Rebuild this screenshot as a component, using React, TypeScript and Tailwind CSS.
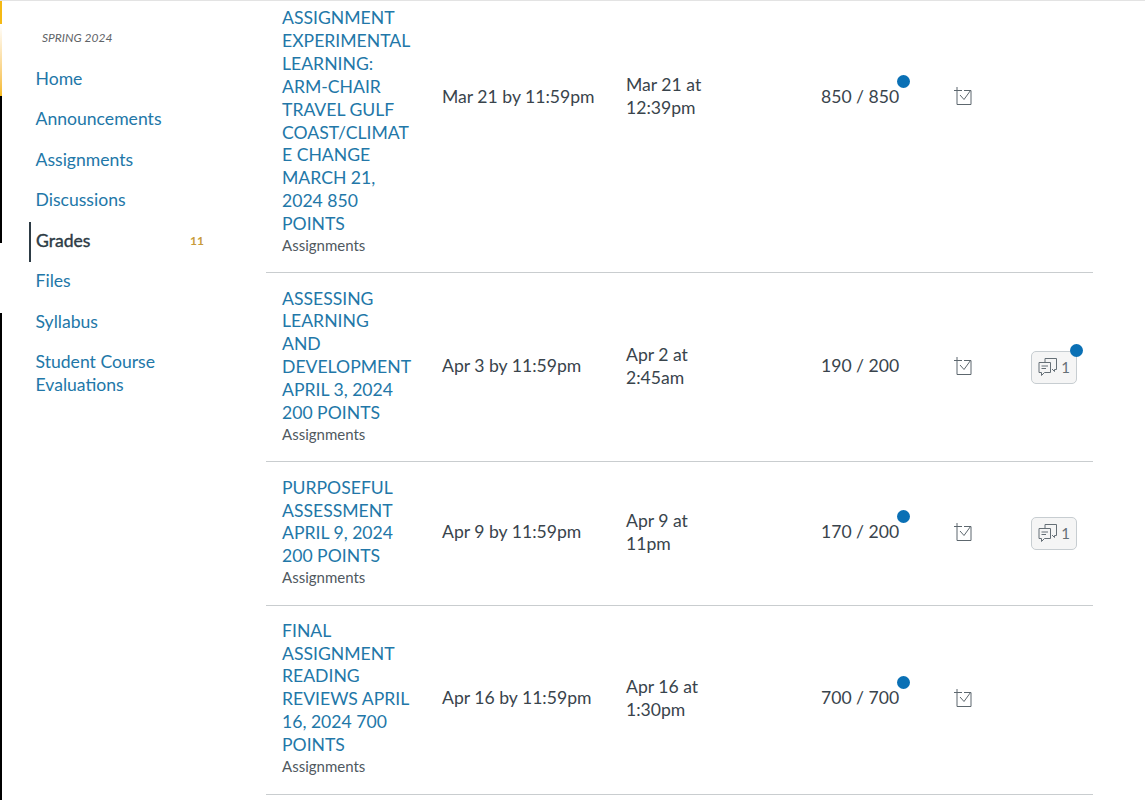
const navItems = ["Home", "Announcements", "Assignments", "Discussions", "Grades", "Files", "Syllabus", "Student Course Evaluations"];

type Row = {
  title: string;
  due: string;
  submitted: string;
  score: string;
  unread?: boolean;
  comments?: boolean;
  commentUnread?: boolean;
  pad: string;
  cellShift?: string;
};

const rows: Row[] = [
  {
    title: "ASSIGNMENT EXPERIMENTAL LEARNING: ARM-CHAIR TRAVEL GULF COAST/CLIMATE CHANGE MARCH 21, 2024 850 POINTS",
    due: "Mar 21 by 11:59pm",
    submitted: "Mar 21 at 12:39pm",
    score: "850 / 850",
    unread: true,
    pad: "pt-[6px] pb-[17px]",
    cellShift: "mb-[70px]",
  },
  {
    title: "ASSESSING LEARNING\nAND DEVELOPMENT APRIL 3, 2024 200 POINTS",
    due: "Apr 3 by 11:59pm",
    submitted: "Apr 2 at 2:45am",
    score: "190 / 200",
    comments: true,
    commentUnread: true,
    pad: "pt-[14.5px] pb-[17.1px]",
  },
  {
    title: "PURPOSEFUL ASSESSMENT APRIL 9, 2024 200 POINTS",
    due: "Apr 9 by 11:59pm",
    submitted: "Apr 9 at 11pm",
    score: "170 / 200",
    unread: true,
    comments: true,
    pad: "pt-[14.5px] pb-[17.9px]",
  },
  {
    title: "FINAL ASSIGNMENT READING REVIEWS APRIL 16, 2024 700 POINTS",
    due: "Apr 16 by 11:59pm",
    submitted: "Apr 16 at 1:30pm",
    score: "700 / 700",
    unread: true,
    pad: "pt-[13.5px] pb-[18.1px]",
  },
];

function TodoIcon({ className }: { className?: string }) {
  return (
    <svg width="19" height="18" viewBox="0 0 19 18" fill="none" stroke="#5d676e" strokeWidth="1" className={`block shrink-0 ${className ?? ""}`}>
      <path d="M3 0v17.5h14V3.5h-7M0 3.5h8" />
      <path d="M6 8l4 4.5 6.5-9" />
    </svg>
  );
}

function CommentIcon() {
  return (
    <svg width="20" height="18" viewBox="0 0 20 18" fill="none" stroke="#656f76" strokeWidth="1" className="block shrink-0">
      <path d="M1 4.5h11.5v10H6.5l-3 3v-3H1z" />
      <path d="M7 4.5V.5h11.5v11h-2v2l-2.5-2.5" />
      <path d="M3.5 8h6.5M3.5 10.5h4.5" />
    </svg>
  );
}

function Dot({ className }: { className: string }) {
  return <span className={`absolute h-[13px] w-[13px] rounded-full bg-[#0a70b5] ${className}`} />;
}

function GradeRow({ row }: { row: Row }) {
  const shift = row.cellShift ?? "";
  return (
    <div className={`flex items-center border-b border-[#c9cdcf] ${row.pad}`}>
      <div className="ml-[16px] w-[130px] shrink-0">
        <a className="block whitespace-pre-line text-[17.6px] leading-[22.9px] text-[#2277a8] [overflow-wrap:anywhere]">{row.title}</a>
        <div className="-mt-[1px] text-[15px] leading-[20px] text-[#50595f]">Assignments</div>
      </div>
      <div className={`ml-[30px] w-[184px] shrink-0 text-[17.6px] leading-[23px] ${shift}`}>{row.due}</div>
      <div className={`w-[110px] shrink-0 text-[17.6px] leading-[23px] ${shift}`}>{row.submitted}</div>
      <div className={`relative ml-[85px] w-[133px] shrink-0 text-[17.6px] leading-[23px] ${shift}`}>
        {row.score}
        {row.unread && <Dot className="left-[76px] top-[-10px]" />}
      </div>
      <TodoIcon className={shift} />
      {row.comments && (
        <div className="relative ml-[58px] mt-[3px] flex h-[33px] w-[46px] items-center justify-center gap-[3px] rounded-[5px] border border-[#c7cdd1] bg-[#f5f5f5] text-[15px] text-[#656f76]">
          <CommentIcon />
          <span>1</span>
          {row.commentUnread && <Dot className="right-[-7px] top-[-8px]" />}
        </div>
      )}
    </div>
  );
}

export default function App() {
  return (
    <div className="flex h-[800px] overflow-hidden border-t border-[#e3e3e3] bg-white font-['Lato',sans-serif] text-[#39444c]">
      <div className="flex w-[2px] shrink-0 flex-col">
        <div className="h-[23px] bg-[#f5b914]" />
        <div className="h-[72px] bg-gradient-to-b from-white to-[#f5b914]" />
        <div className="h-[147px] bg-black" />
        <div className="h-[70px] bg-white" />
        <div className="flex-1 bg-black" />
      </div>

      <aside className="w-[264px] shrink-0 pl-[27px]">
        <div className="pl-[13px] pt-[30px] text-[12px] leading-[14px] italic text-[#5f6468]">SPRING 2024</div>
        <nav className="mt-[13px] w-[175px]">
          {navItems.map((item) =>
            item === "Grades" ? (
              <div key={item} className="mb-[-1.5px] mt-[1.5px] flex h-[40.5px] items-center justify-between border-l-2 border-[#2d3b45] pb-[2px] pl-[5px] text-[#2d3b45]">
                <span className="text-[17.6px] [-webkit-text-stroke:0.4px_#2d3b45]">{item}</span>
                <span className="text-[12px] font-bold text-[#c89b3a]">11</span>
              </div>
            ) : (
              <a key={item} className="block py-[8.75px] pl-[6.5px] text-[17.6px] leading-[23px] text-[#2277a8]">
                {item}
              </a>
            ),
          )}
        </nav>
      </aside>

      <main className="w-[827px] shrink-0">
        {rows.map((row) => (
          <GradeRow key={row.title} row={row} />
        ))}
      </main>
    </div>
  );
}
